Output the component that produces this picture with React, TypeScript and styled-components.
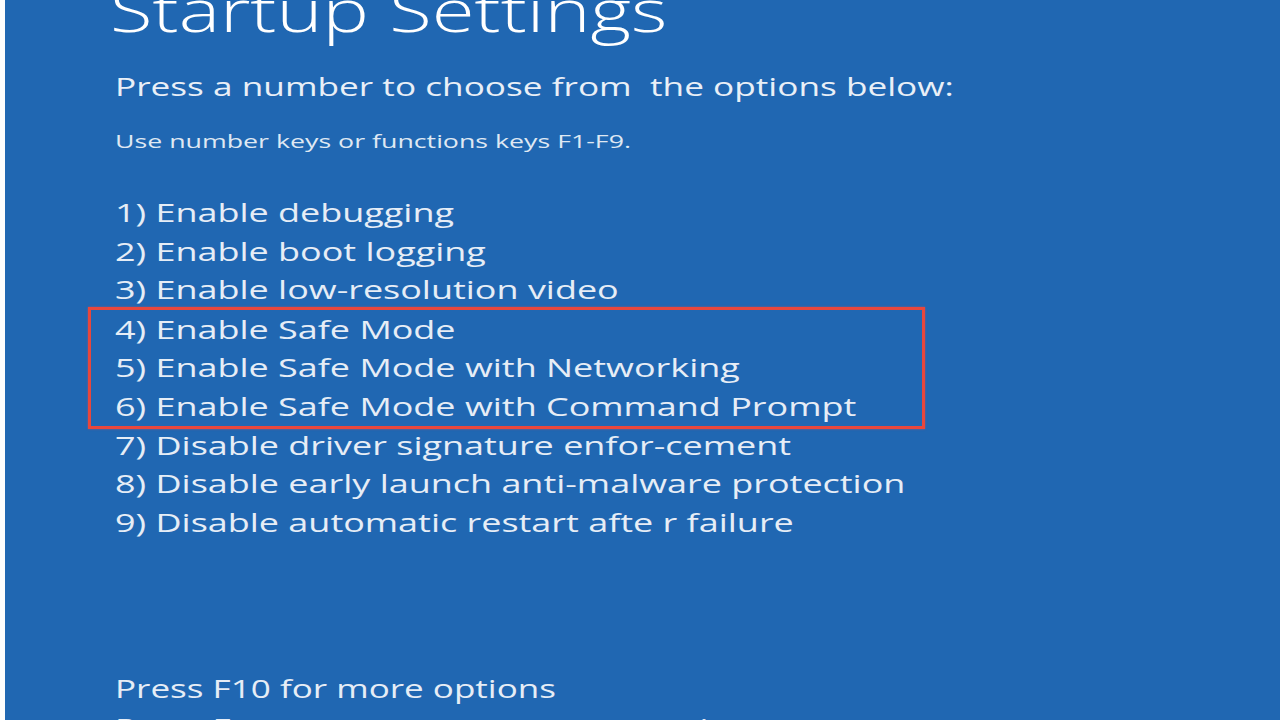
import React from "react";
import styled, { createGlobalStyle } from "styled-components";

const Global = createGlobalStyle`
  html, body { margin: 0; padding: 0; background: #ffffff; }
  body { width: 1280px; height: 720px; overflow: hidden; }
`;

const Screen = styled.div`
  width: 1280px;
  height: 720px;
  overflow: hidden;
  display: flex;
  background: #fdfdfd;
`;

const Panel = styled.main`
  flex: 1;
  margin-left: 5px;
  background: #2067b2;
  color: #eef3f9;
  font-family: "Open Sans", "Noto Sans", sans-serif;
  padding-left: 105px;
  display: flex;
  flex-direction: column;
`;

const Stretch = styled.div<{ $scale: number }>`
  transform: scaleX(${(p) => p.$scale});
  transform-origin: left center;
  white-space: nowrap;
`;

const Title = styled.h1`
  margin: -25px 0 0 0;
  font-weight: 300;
  font-size: 58px;
  line-height: 70px;
  color: #ffffff;
`;

const Lead = styled.p`
  margin: 25px 0 0 5px;
  font-size: 26px;
  line-height: 32px;
  color: #e9eff7;
`;

const Hint = styled.p`
  margin: 27px 0 0 5px;
  font-size: 18px;
  line-height: 24px;
  color: #dfe8f3;
`;

const Options = styled.ol`
  list-style: none;
  margin: 40px 0 0 5px;
  padding: 0;
`;

const Option = styled.li`
  font-size: 25px;
  line-height: 38.6px;
  color: #e6edf6;
`;

const Highlight = styled.div`
  box-sizing: border-box;
  margin: -2px 0 -3px -27px;
  width: 837px;
  padding-left: 24px;
  border: 3px solid #e8473c;
  box-shadow: 0 0 2px rgba(200, 80, 100, 0.7);
`;

const Footer = styled.div`
  margin: 128px 0 0 5px;
  font-size: 25px;
  line-height: 38.6px;
  color: #e6edf6;
`;

const before = [
  "1) Enable debugging",
  "2) Enable boot logging",
  "3) Enable low-resolution video",
];
const safe = [
  "4) Enable Safe Mode",
  "5) Enable Safe Mode with Networking",
  "6) Enable Safe Mode with Command Prompt",
];
const after = [
  "7) Disable driver signature enfor-cement",
  "8) Disable early launch anti-malware protection",
  "9) Disable automatic restart afte r failure",
];

const ITEM = 1.438;

export default function App() {
  return (
    <Screen>
      <Global />
      <Panel>
        <Title>
          <Stretch $scale={1.345}>Startup Settings</Stretch>
        </Title>
        <Lead>
          <Stretch $scale={1.354}>Press a number to choose from &nbsp;the options below:</Stretch>
        </Lead>
        <Hint>
          <Stretch $scale={1.485}>Use number keys or functions keys F1-F9.</Stretch>
        </Hint>
        <Options>
          {before.map((t) => (
            <Option key={t}>
              <Stretch $scale={ITEM}>{t}</Stretch>
            </Option>
          ))}
          <Highlight>
            {safe.map((t) => (
              <Option key={t}>
                <Stretch $scale={ITEM}>{t}</Stretch>
              </Option>
            ))}
          </Highlight>
          {after.map((t) => (
            <Option key={t}>
              <Stretch $scale={ITEM}>{t}</Stretch>
            </Option>
          ))}
        </Options>
        <Footer>
          <Stretch $scale={1.402}>Press F10 for more options</Stretch>
          <Stretch $scale={1.402}>Press Enter to return to your operating system</Stretch>
        </Footer>
      </Panel>
    </Screen>
  );
}
